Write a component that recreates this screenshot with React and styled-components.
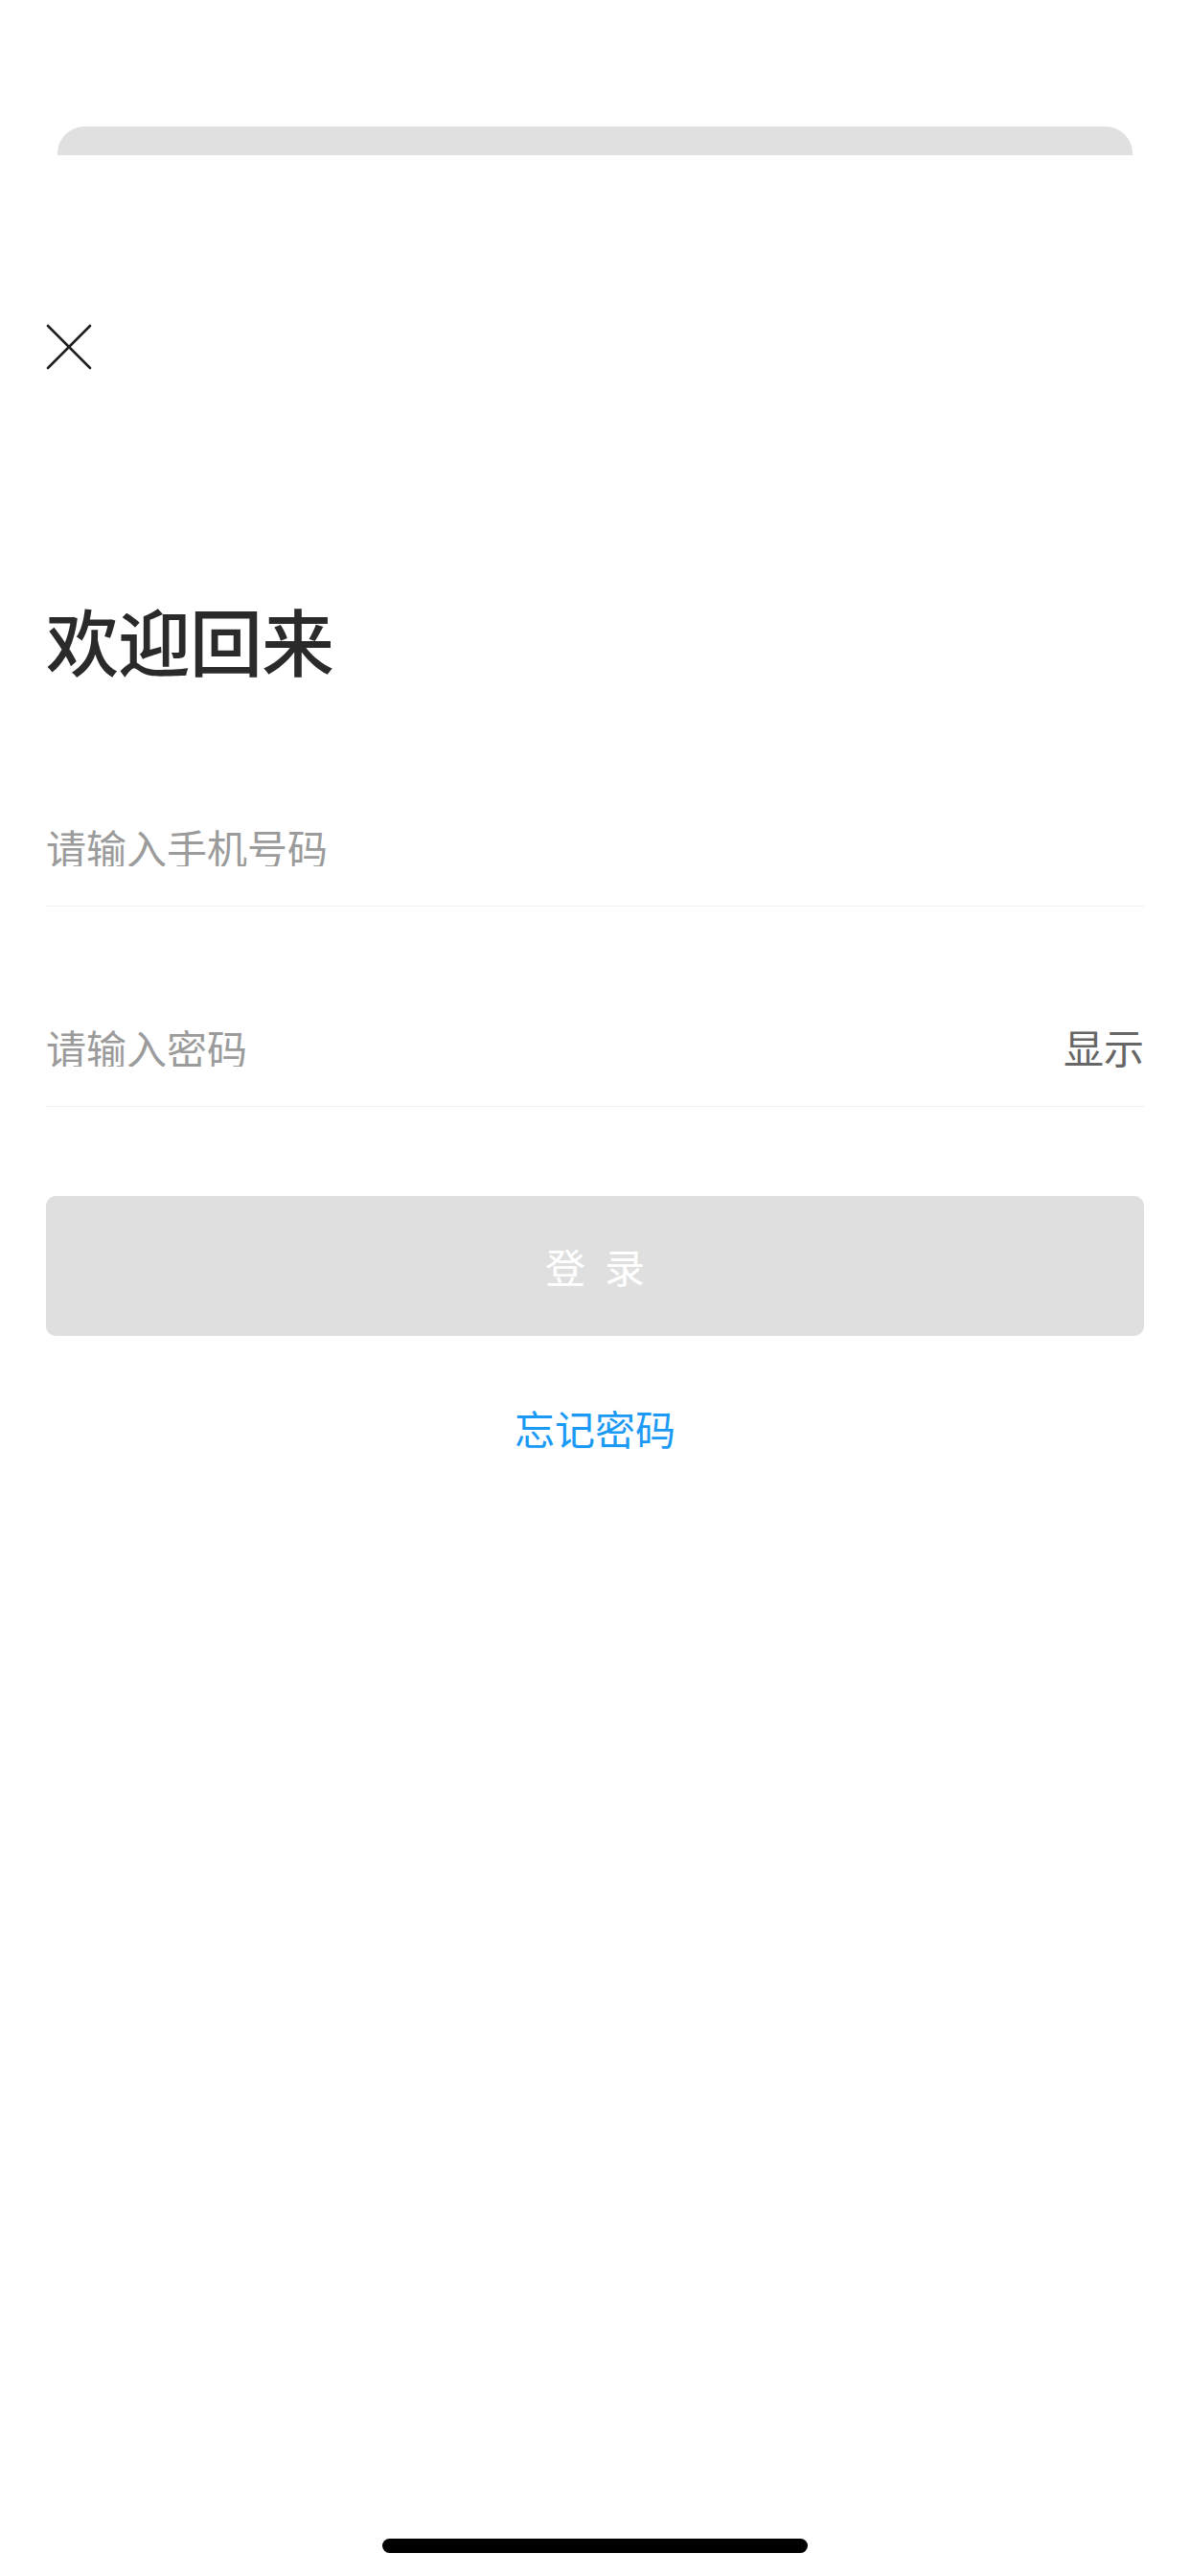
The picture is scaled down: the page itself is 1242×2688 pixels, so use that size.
import React from "react";
import styled, { createGlobalStyle } from "styled-components";

const GlobalStyle = createGlobalStyle`
  html, body {
    margin: 0;
    padding: 0;
    background: #ffffff;
  }
  body {
    font-family: "Noto Sans CJK SC", "Noto Sans", sans-serif;
    -webkit-font-smoothing: antialiased;
  }
  * { box-sizing: border-box; }
`;

const Screen = styled.div`
  width: 1242px;
  min-height: 2688px;
  display: flex;
  flex-direction: column;
  background: #ffffff;
`;

const BackCard = styled.div`
  margin: 132px 60px 0;
  height: 30px;
  background: #e0e0e0;
  border-radius: 28px 28px 0 0;
`;

const Sheet = styled.main`
  display: flex;
  flex-direction: column;
  padding: 0 48px;
`;

const CloseButton = styled.button`
  margin-top: 176px;
  width: 48px;
  height: 48px;
  padding: 0;
  border: none;
  background: transparent;
  display: flex;
  align-items: center;
  justify-content: center;
  cursor: pointer;
`;

const Title = styled.h1`
  margin: 243px 0 0;
  font-size: 76px;
  line-height: 76px;
  font-weight: 500;
  color: #2a2a2a;
  letter-spacing: -1px;
`;

const Field = styled.div`
  display: flex;
  align-items: center;
  height: 125px;
  margin-top: ${(p) => p.$gap}px;
  border-bottom: 1px solid #efefef;
`;

const Input = styled.input`
  flex: 1;
  min-width: 0;
  border: none;
  outline: none;
  background: transparent;
  padding: 0;
  font-family: "Noto Sans CJK SC", "Noto Sans", sans-serif;
  font-size: 42px;
  line-height: 42px;
  height: 42px;
  color: #333;
  &::placeholder {
    color: #9b9b9b;
  }
`;

const Toggle = styled.span`
  font-size: 42px;
  line-height: 42px;
  color: #666666;
`;

const LoginButton = styled.button`
  margin-top: 93px;
  height: 146px;
  border: none;
  border-radius: 10px;
  background: #dfdfdf;
  color: #ffffff;
  font-family: "Noto Sans CJK SC", "Noto Sans", sans-serif;
  font-size: 42px;
  line-height: 42px;
  letter-spacing: 20px;
  padding: 0 0 0 20px;
  cursor: pointer;
`;

const ForgotLink = styled.a`
  margin-top: 75px;
  align-self: center;
  font-size: 42px;
  line-height: 42px;
  color: #1b9af5;
  text-decoration: none;
  cursor: pointer;
`;

const HomeIndicator = styled.div`
  margin: auto auto 24px;
  width: 444px;
  height: 15px;
  border-radius: 8px;
  background: #000000;
`;

function CloseIcon() {
  return (
    <svg width="48" height="48" viewBox="0 0 48 48" fill="none">
      <path
        d="M2 2 L46 46 M46 2 L2 46"
        stroke="#1f1f1f"
        strokeWidth="2.6"
        strokeLinecap="round"
      />
    </svg>
  );
}

export default function App() {
  return (
    <>
      <GlobalStyle />
      <Screen>
        <BackCard />
        <Sheet>
          <CloseButton aria-label="关闭">
            <CloseIcon />
          </CloseButton>
          <Title>欢迎回来</Title>
          <Field $gap={116}>
            <Input type="tel" placeholder="请输入手机号码" />
          </Field>
          <Field $gap={84}>
            <Input type="password" placeholder="请输入密码" />
            <Toggle>显示</Toggle>
          </Field>
          <LoginButton>登录</LoginButton>
          <ForgotLink>忘记密码</ForgotLink>
        </Sheet>
        <HomeIndicator />
      </Screen>
    </>
  );
}
